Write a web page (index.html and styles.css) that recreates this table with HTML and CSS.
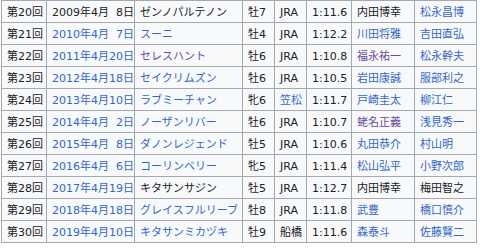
FILE: index.html
```html
<!DOCTYPE html>
<html lang="ja">
<head>
<meta charset="utf-8">
<link rel="stylesheet" href="styles.css">
</head>
<body>
<div class="wrap">
<table class="wikitable">
<colgroup>
<col class="c1"><col class="c2"><col class="c3"><col class="c4"><col class="c5"><col class="c6"><col class="c7"><col class="c8">
</colgroup>
<tbody>
<tr><td>第20回</td><td>2009年4月&#8199;8日</td><td>ゼンノパルテノン</td><td>牡7</td><td>JRA</td><td>1:11.6</td><td>内田博幸</td><td><a class="link">松永昌博</a></td></tr>
<tr><td>第21回</td><td><a class="link">2010年4月&#8199;7日</a></td><td><a class="link">スーニ</a></td><td>牡4</td><td>JRA</td><td>1:12.2</td><td><a class="link">川田将雅</a></td><td><a class="link">吉田直弘</a></td></tr>
<tr><td>第22回</td><td><a class="link">2011年4月20日</a></td><td><a class="visited">セレスハント</a></td><td>牡6</td><td>JRA</td><td>1:10.8</td><td><a class="visited">福永祐一</a></td><td><a class="link">松永幹夫</a></td></tr>
<tr><td>第23回</td><td><a class="link">2012年4月18日</a></td><td><a class="link">セイクリムズン</a></td><td>牡6</td><td>JRA</td><td>1:10.5</td><td><a class="link">岩田康誠</a></td><td><a class="link">服部利之</a></td></tr>
<tr><td>第24回</td><td><a class="link">2013年4月10日</a></td><td><a class="link">ラブミーチャン</a></td><td>牝6</td><td><a class="link">笠松</a></td><td>1:11.7</td><td><a class="link">戸崎圭太</a></td><td><a class="link">柳江仁</a></td></tr>
<tr><td>第25回</td><td><a class="link">2014年4月&#8199;2日</a></td><td><a class="link">ノーザンリバー</a></td><td>牡6</td><td>JRA</td><td>1:10.7</td><td><a class="visited">蛯名正義</a></td><td><a class="link">浅見秀一</a></td></tr>
<tr><td>第26回</td><td><a class="link">2015年4月&#8199;8日</a></td><td><a class="link">ダノンレジェンド</a></td><td>牡5</td><td>JRA</td><td>1:10.6</td><td><a class="link">丸田恭介</a></td><td><a class="link">村山明</a></td></tr>
<tr><td>第27回</td><td><a class="link">2016年4月&#8199;6日</a></td><td><a class="link">コーリンベリー</a></td><td>牝5</td><td>JRA</td><td>1:11.4</td><td><a class="link">松山弘平</a></td><td><a class="link">小野次郎</a></td></tr>
<tr><td>第28回</td><td><a class="link">2017年4月19日</a></td><td>キタサンサジン</td><td>牡5</td><td>JRA</td><td>1:12.7</td><td>内田博幸</td><td>梅田智之</td></tr>
<tr><td>第29回</td><td><a class="link">2018年4月18日</a></td><td><a class="link">グレイスフルリーブ</a></td><td>牡8</td><td>JRA</td><td>1:11.8</td><td><a class="link">武豊</a></td><td><a class="link">橋口慎介</a></td></tr>
<tr><td>第30回</td><td><a class="link">2019年4月10日</a></td><td><a class="link">キタサンミカヅキ</a></td><td>牡9</td><td>船橋</td><td>1:11.6</td><td><a class="link">森泰斗</a></td><td><a class="link">佐藤賢二</a></td></tr>
</tbody>
</table>
</div>
</body>
</html>
```

FILE: styles.css
```css
html, body {
  margin: 0;
  padding: 0;
  background: #ffffff;
}

.wrap {
  padding-left: 1px;
}

.wikitable {
  border-collapse: collapse;
  table-layout: fixed;
  width: 476px;
  background: #f8f9fa;
  color: #202122;
  font-family: "DejaVu Sans", "Noto Sans CJK JP", sans-serif;
  font-size: 11px;
  border: 1px solid #a2a9b1;
}

.c1 { width: 45px; }
.c2 { width: 88px; }
.c3 { width: 108px; }
.c4 { width: 32px; }
.c5 { width: 32px; }
.c6 { width: 45px; }
.c7 { width: 63px; }
.c8 { width: 62px; }

.wikitable td {
  border: 1px solid #a2a9b1;
  height: 21px;
  padding: 2px 0 0 5px;
  box-sizing: border-box;
  line-height: 19px;
  white-space: nowrap;
  overflow: hidden;
  vertical-align: middle;
}

.link {
  color: #3366cc;
  text-decoration: none;
}

.visited {
  color: #6b4ba1;
  text-decoration: none;
}
```
